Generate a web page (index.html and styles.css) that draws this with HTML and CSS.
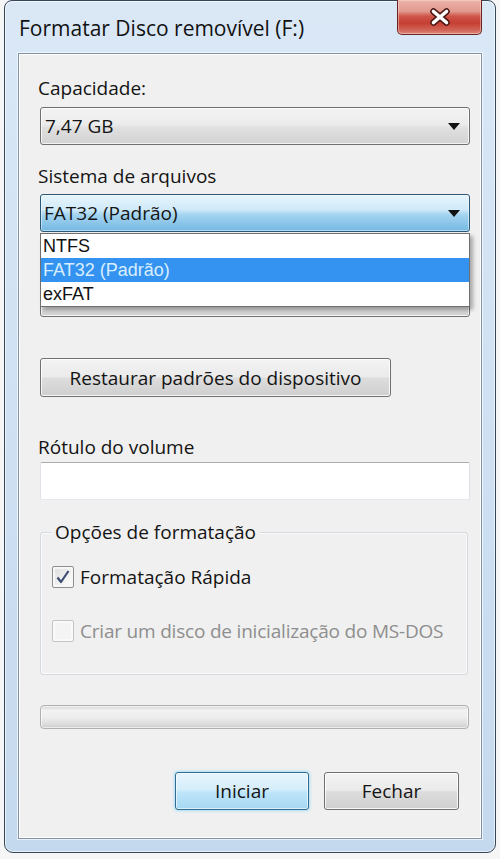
FILE: index.html
```html
<!DOCTYPE html>
<html lang="pt">
<head>
<meta charset="utf-8">
<title>Formatar Disco removível (F:)</title>
<link rel="stylesheet" href="styles.css">
</head>
<body>
<div class="window">
  <div class="titlebar">
    <span class="title">Formatar Disco removível (F:)</span>
    <div class="close" aria-label="Fechar">
      <svg width="24" height="20" viewBox="0 0 24 20">
        <path d="M5.5 4.5 L18.5 15.5 M18.5 4.5 L5.5 15.5" stroke="#4a1512" stroke-width="6.5" stroke-linecap="round" fill="none"/>
        <path d="M5.5 4.5 L18.5 15.5 M18.5 4.5 L5.5 15.5" stroke="#ffffff" stroke-width="3.6" stroke-linecap="round" fill="none"/>
      </svg>
    </div>
  </div>
  <div class="client">
    <div class="label lbl-cap">Capacidade:</div>
    <div class="combo combo-cap"><span class="combo-text">7,47 GB</span><span class="arrow"></span></div>
    <div class="label lbl-fs">Sistema de arquivos</div>
    <div class="combo-wrap">
      <div class="combo combo-open"><span class="combo-text fs-text">FAT32 (Padrão)</span><span class="arrow"></span></div>
      <div class="dropdown">
        <div class="opt">NTFS</div>
        <div class="opt sel">FAT32 (Padrão)</div>
        <div class="opt">exFAT</div>
      </div>
    </div>
    <div class="label-spacer"></div>
    <div class="combo combo-alloc"></div>
    <div class="btn btn-restore">Restaurar padrões do dispositivo</div>
    <div class="label lbl-vol">Rótulo do volume</div>
    <div class="textbox"></div>
    <div class="group">
      <div class="legend-row"><span class="legend">Opções de formatação</span></div>
      <div class="check-row row-quick">
        <span class="checkbox checked">
          <svg width="16" height="16" viewBox="0 0 16 16"><path d="M2.5 8.5 L6 13 L13.5 2" stroke="#3d4c72" stroke-width="2.2" fill="none" stroke-linejoin="round"/></svg>
        </span>
        <span class="check-label">Formatação Rápida</span>
      </div>
      <div class="check-row row-dos disabled">
        <span class="checkbox"></span>
        <span class="check-label dos-label">Criar um disco de inicialização do MS-DOS</span>
      </div>
    </div>
    <div class="progress"></div>
    <div class="actions">
      <div class="btn btn-default">Iniciar</div>
      <div class="btn btn-close">Fechar</div>
    </div>
  </div>
</div>
</body>
</html>
```
FILE: styles.css
```css
* { box-sizing: border-box; }
html, body { margin: 0; padding: 0; }
body {
  width: 500px;
  height: 859px;
  overflow: hidden;
  background: #f6f6f6;
  font-family: "Open Sans", "Noto Sans", sans-serif;
  font-size: 19px;
  color: #141414;
}
.window {
  margin-left: 4px;
  width: 492px;
  height: 853px;
  border: 1px solid #35465a;
  border-radius: 8px 8px 9px 9px;
  background: linear-gradient(180deg, #dae8f6 0%, #d0e1f3 45%, #c5d9ee 100%);
  box-shadow: inset 0 0 0 1px rgba(255,255,255,0.6);
  padding: 0 13px 13px 13px;
  display: flex;
  flex-direction: column;
}
.titlebar {
  flex: none;
  height: 52px;
  display: flex;
  justify-content: space-between;
  align-items: flex-start;
}
.title {
  margin-top: 13px;
  margin-left: 1px;
  line-height: 28px;
  font-size: 21px;
  color: #121212;
  white-space: nowrap;
}
.close {
  width: 85px;
  height: 35px;
  margin-top: -1px;
  border: 1px solid #6a2520;
  border-top: none;
  border-radius: 0 0 5px 5px;
  background: linear-gradient(180deg, #eab3aa 0%, #e29a8f 33%, #cf5449 48%, #c53f33 68%, #d06356 88%, #dd8a7c 100%);
  box-shadow: inset 0 0 0 1px rgba(255,225,220,0.45);
  display: flex;
  align-items: center;
  justify-content: center;
}
.client {
  flex: 1;
  border: 1px solid #7f92a8;
  background: #f0f0f0;
  box-shadow: 0 0 0 1px rgba(255,255,255,0.65), inset 0 0 0 1px #ffffff;
  padding: 22px 11px 0 21px;
  display: flex;
  flex-direction: column;
  align-items: stretch;
}
.label {
  height: 24px;
  line-height: 24px;
  margin-left: -2px;
  white-space: nowrap;
}
.combo {
  position: relative;
  height: 38px;
  border: 1px solid #707070;
  border-radius: 3px;
  background: linear-gradient(180deg, #f3f3f3 0%, #ececec 45%, #e0e0e0 55%, #d2d2d2 100%);
  box-shadow: inset 0 0 0 1px rgba(255,255,255,0.75);
  display: flex;
  align-items: center;
  justify-content: space-between;
  padding: 0 9px 0 4px;
}
.combo-text { line-height: 24px; }
.arrow {
  width: 0;
  height: 0;
  border-left: 6px solid transparent;
  border-right: 6px solid transparent;
  border-top: 7px solid #111;
}
.combo-cap { margin-top: 7px; }
.lbl-fs { margin-top: 19px; }
.combo-wrap { position: relative; margin-top: 6px; }
.combo-open {
  border-color: #2c5877;
  background: linear-gradient(180deg, #e7f5fc 0%, #d0eaf9 40%, #a4d4f0 55%, #74b8e3 100%);
  box-shadow: inset 0 0 0 1px rgba(255,255,255,0.45);
}
.fs-text { margin-left: -1px; }
.dropdown {
  position: absolute;
  left: 0;
  top: 39px;
  width: 430px;
  height: 74px;
  background: #ffffff;
  border: 1px solid #6f6f6f;
  box-shadow: 3px 3px 4px rgba(0,0,0,0.3);
  z-index: 2;
  font-family: "Liberation Sans", Arial, sans-serif;
  font-size: 18px;
}
.opt {
  height: 24px;
  line-height: 24px;
  padding-left: 2px;
  color: #111;
}
.opt.sel {
  background: #3493f0;
  color: #d8eeff;
}
.label-spacer { height: 24px; margin-top: 18px; }
.combo-alloc { margin-top: 5px; }
.btn {
  height: 38px;
  border: 1px solid #707070;
  border-radius: 3px;
  background: linear-gradient(180deg, #f3f3f3 0%, #ebebeb 48%, #dddddd 52%, #cfcfcf 100%);
  box-shadow: inset 0 0 0 1px rgba(255,255,255,0.8);
  display: flex;
  align-items: center;
  justify-content: center;
  white-space: nowrap;
}
.btn-restore {
  margin-top: 41px;
  height: 39px;
  width: 351px;
}
.lbl-vol { margin-top: 38px; }
.textbox {
  margin-top: 3px;
  height: 38px;
  background: #ffffff;
  border: 1px solid;
  border-color: #abadb3 #dbdfe6 #e3e9ef #e2e3ea;
  border-radius: 2px;
}
.group {
  margin-top: 32px;
  margin-right: 2px;
  height: 143px;
  border: 1px solid #d3d9de;
  border-radius: 3px;
  box-shadow: inset 0 0 0 1px #fbfbfb;
  padding: 0 0 0 11px;
}
.legend-row {
  margin-top: -13px;
  height: 24px;
  line-height: 24px;
}
.legend {
  display: inline-block;
  background: #f0f0f0;
  padding: 0 4px;
  margin-left: -1px;
}
.check-row {
  height: 24px;
  display: flex;
  align-items: center;
  gap: 6px;
}
.row-quick { margin-top: 21px; }
.row-dos { margin-top: 30px; }
.checkbox {
  width: 22px;
  height: 22px;
  border: 1px solid #8e8f8f;
  border-radius: 2px;
  background: linear-gradient(135deg, #dcdcdc 0%, #f2f2f2 60%, #ffffff 100%);
  box-shadow: inset 0 0 0 2px #f7f7f7;
  display: flex;
  align-items: center;
  justify-content: center;
  flex: none;
}
.disabled .checkbox {
  border-color: #c4c4c4;
  background: #f4f4f4;
  box-shadow: inset 0 0 0 2px #fafafa;
}
.disabled .check-label { color: #8e8e8e; }
.check-label { white-space: nowrap; line-height: 24px; }
.dos-label { letter-spacing: -0.2px; }
.progress {
  margin-top: 30px;
  margin-right: 1px;
  height: 24px;
  border: 1px solid #b0b0b0;
  border-radius: 4px;
  background: linear-gradient(180deg, #d8d8d8 0%, #f2f2f2 22%, #eeeeee 50%, #dedede 80%, #cdcdcd 100%);
  box-shadow: inset 0 0 0 1px rgba(255,255,255,0.6);
}
.actions {
  margin-top: 43px;
  margin-right: 11px;
  display: flex;
  justify-content: flex-end;
  gap: 15px;
}
.btn-default {
  width: 134px;
  border-color: #2f6b93;
  background: linear-gradient(180deg, #e6f5fd 0%, #d6eefb 45%, #bde4f9 55%, #a6d8f3 100%);
  box-shadow: 0 0 3px 1px #a9def5, inset 0 0 0 1px rgba(255,255,255,0.6);
}
.btn-close {
  width: 135px;
}
```
